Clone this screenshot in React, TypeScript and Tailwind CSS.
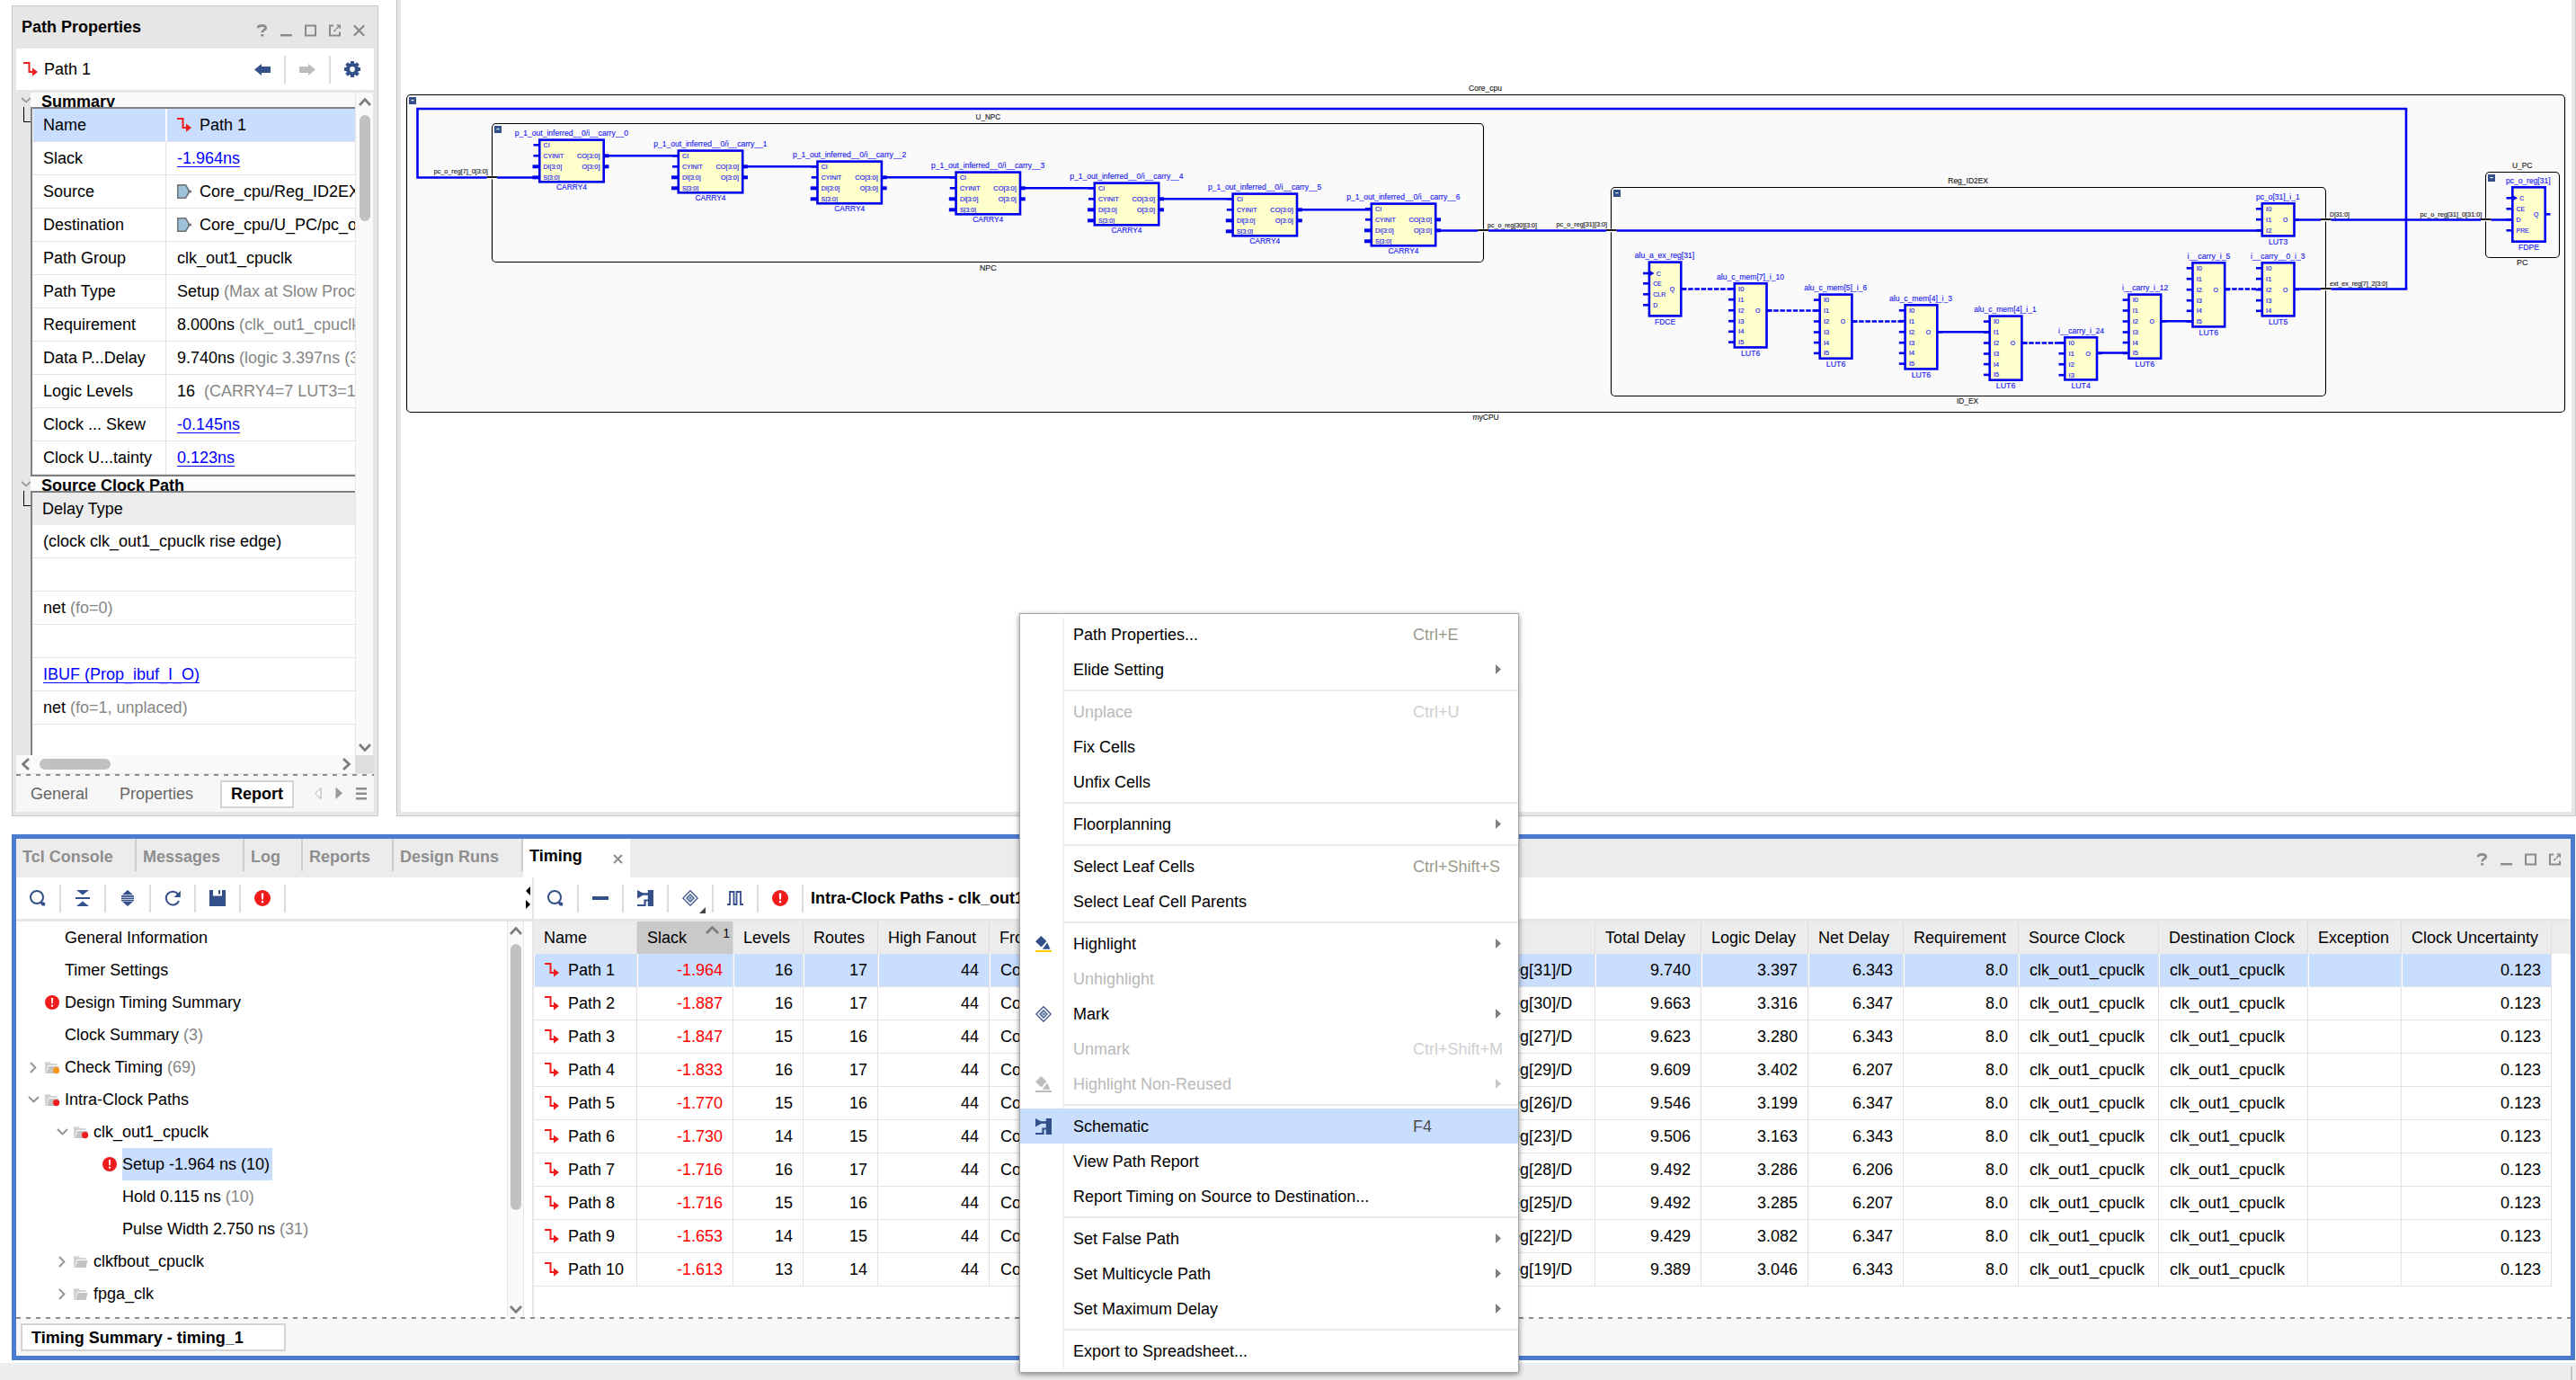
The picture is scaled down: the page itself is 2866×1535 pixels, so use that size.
import React from "react";

type IconProps = { className?: string };

/* ---------- small icons ---------- */

const PathIcon = ({ className = "" }: IconProps) => (
  <svg width="16" height="16" viewBox="0 0 16 16" className={`shrink-0 ${className}`}>
    <path d="M0 1H6.5V11H10" fill="none" stroke="#ee1c1c" strokeWidth="2" />
    <path d="M10 6.5L16 11L10 15.8Z" fill="#ee1c1c" />
  </svg>
);

const PinIcon = ({ className = "" }: IconProps) => (
  <svg width="16" height="16" viewBox="0 0 16 16" className={`shrink-0 ${className}`}>
    <path d="M.8 .8H9.5L13 6.5V9.5L9.5 15.2H.8Z" fill="#9cc2d8" stroke="#6f6f6f" strokeWidth="1.5" />
    <path d="M12.5 8H16" stroke="#6f6f6f" strokeWidth="2.5" />
  </svg>
);

const ErrorIcon = ({ size = 18 }: { size?: number }) => (
  <svg width={size} height={size} viewBox="0 0 18 18" className="shrink-0">
    <circle cx="9" cy="9" r="9" fill="#ee1c1c" />
    <path d="M7.8 3.5H10.2L9.9 10.5H8.1Z" fill="#fff" />
    <rect x="7.9" y="12" width="2.2" height="2.4" fill="#fff" />
  </svg>
);

const SearchIcon = () => (
  <svg width="18" height="18" viewBox="0 0 18 18">
    <circle cx="8" cy="8" r="7" fill="none" stroke="#33508a" strokeWidth="2" />
    <path d="M12.5 13.5L15 16" stroke="#33508a" strokeWidth="3" />
    <circle cx="15.3" cy="15.7" r="2.1" fill="#33508a" />
  </svg>
);

const CollapseIcon = () => (
  <svg width="16" height="18" viewBox="0 0 16 18" fill="#33508a">
    <path d="M1 0H15L8 5.5ZM1 18H15L8 12.5Z" />
    <rect y="8" width="16" height="2" />
  </svg>
);

const ExpandIcon = () => (
  <svg width="14" height="18" viewBox="0 0 14 18" fill="#33508a">
    <path d="M1 5.2L7 0L13 5.2ZM1 12.8L7 18L13 12.8Z" />
    <rect y="6" width="14" height="1.8" />
    <rect y="8.6" width="14" height="1.4" />
    <rect y="10.7" width="14" height="1.6" />
  </svg>
);

const RefreshIcon = () => (
  <svg width="18" height="18" viewBox="0 0 18 18">
    <path d="M15.2 4.8A7.4 7.4 0 1 0 16 12" fill="none" stroke="#33508a" strokeWidth="2" />
    <path d="M17.8 .8V8H10.6Z" fill="#33508a" />
  </svg>
);

const SaveIcon = () => (
  <svg width="18" height="18" viewBox="0 0 18 18">
    <path d="M0 0H4V6.5H14V0H18V18H0Z" fill="#33508a" />
    <path d="M10 0H12V4.5H10Z" fill="#33508a" />
  </svg>
);

const MinusIcon = () => <div className="h-1 w-[18px] bg-[#33508a]" />;

const SchematicIcon = () => (
  <svg width="18" height="18" viewBox="0 0 18 18" fill="#33508a">
    <path d="M0 0L6.5 3.6V5.8L0 9.5Z" />
    <path d="M5 3.2H12V5.8H5Z" />
    <path d="M11.8 0H18V18H11.8V12.6H9.6V18H0V16H7.4V10.4H11.8Z" />
  </svg>
);

const MarkIcon = () => (
  <svg width="18" height="18" viewBox="0 0 18 18" fill="none" stroke="#33508a">
    <path d="M9 .8L17.2 9L9 17.2L.8 9Z" strokeWidth="1.3" />
    <path d="M9 5L13 9L9 13L5 9Z" strokeWidth="1.3" />
    <circle cx="9" cy="9" r="1.2" strokeWidth="1" />
  </svg>
);

const WaveIcon = () => (
  <svg width="18" height="16" viewBox="0 0 18 16" fill="none" stroke="#33508a" strokeWidth="1.8">
    <path d="M0 15H3V1H7.5V15H10.5V1H15V15H18" />
  </svg>
);

const GearIcon = () => (
  <svg width="18" height="18" viewBox="-9 -9 18 18">
    {[0, 45, 90, 135].map((a) => (
      <rect key={a} x="-2" y="-9" width="4" height="18" fill="#33508a" transform={`rotate(${a})`} />
    ))}
    <circle r="7" fill="#33508a" />
    <circle r="2.9" fill="#fff" />
  </svg>
);

const Arrow = ({ color, flip }: { color: string; flip?: boolean }) => (
  <svg width="18" height="13" viewBox="0 0 18 13" className={flip ? "-scale-x-100" : ""}>
    <path d="M0 6.5L8 0V3H18V10H8V13Z" fill={color} />
  </svg>
);

const BucketIcon = ({ dim }: { dim?: boolean }) => (
  <svg width="18" height="18" viewBox="0 0 18 18">
    <path d="M6.3 0L12.4 6L6.5 12.6L0 6.3Z" fill={dim ? "#bdbdbd" : "#33508a"} />
    <path d="M13.2 7.5L16.5 14.8H7.8Z" fill={dim ? "#bdbdbd" : "#33508a"} />
    <rect y="16" width="18" height="2" fill={dim ? "#bdbdbd" : "#ffcc00"} />
  </svg>
);

const Chevron = ({ dir, w = 14, color = "#7d7d7d", sw = 2.8 }: { dir: "up" | "down" | "left" | "right"; w?: number; color?: string; sw?: number }) => {
  const vertical = dir === "up" || dir === "down";
  const h = Math.round(w * 0.62);
  const d = {
    up: `M1 ${h - 1}L${w / 2} 1.6L${w - 1} ${h - 1}`,
    down: `M1 1L${w / 2} ${h - 1.6}L${w - 1} 1`,
    left: `M${h - 1} 1L1.6 ${w / 2}L${h - 1} ${w - 1}`,
    right: `M1 1L${h - 1.6} ${w / 2}L1 ${w - 1}`,
  }[dir];
  return (
    <svg width={vertical ? w : h} height={vertical ? h : w} className="block shrink-0">
      <path d={d} fill="none" stroke={color} strokeWidth={sw} />
    </svg>
  );
};

const FolderIcon = ({ dot }: { dot?: string }) => (
  <svg width="17" height="15" viewBox="0 0 17 15" className="shrink-0">
    <path d="M0 14V1.2H5.5L7 3H13.5V5H4L1.5 14Z" fill="#d2d2d2" />
    <path d="M4.5 6H15.5L13.5 14H2Z" fill="#c3c3c3" />
    {dot && <circle cx="12.6" cy="10.6" r="3.6" fill={dot} />}
  </svg>
);

const WindowButtons = ({ close }: { close?: boolean }) => (
  <div className="flex gap-[14px]">
    <svg width="13" height="14" viewBox="0 0 13 14" fill="none" stroke="#8b8b8b" strokeWidth="2.6">
      <path d="M2 4.2C2.2 .6 10.8 .4 10.8 4C10.8 6.6 6.6 6.2 6.6 9.2" />
      <path d="M5.2 12.3H8.2" strokeWidth="2.4" />
    </svg>
    <svg width="13" height="14"><rect y="11" width="13" height="2.4" fill="#8b8b8b" /></svg>
    <svg width="13" height="14"><rect x="1" y="1.5" width="11" height="11" fill="none" stroke="#8b8b8b" strokeWidth="2" /></svg>
    <svg width="13" height="14" fill="none" stroke="#8b8b8b">
      <path d="M5 1.5H1V12.5H12V8.5" strokeWidth="2" />
      <path d="M5.5 8L11 2.5" strokeWidth="1.6" strokeDasharray="3 1" />
      <path d="M8 .5H13V5.5Z" fill="#8b8b8b" stroke="none" />
    </svg>
    {close && (
      <svg width="13" height="14"><path d="M.8 1.2L12.2 12.8M12.2 1.2L.8 12.8" stroke="#8b8b8b" strokeWidth="2.2" /></svg>
    )}
  </div>
);

const DashedLine = () => (
  <div className="h-[2px] w-full shrink-0 bg-[repeating-linear-gradient(90deg,#8f8f8f_0,#8f8f8f_5px,#f7f7f7_5px,#f7f7f7_11px)]" />
);

/* ---------- path properties panel ---------- */

const G = ({ children }: { children: React.ReactNode }) => <span className="text-[#868686]">{children}</span>;
const Link = ({ children }: { children: React.ReactNode }) => (
  <span className="border-b border-[#0000ff] leading-[18px] text-[#0000ff]">{children}</span>
);

const summary: [string, React.ReactNode][] = [
  ["Slack", <Link>-1.964ns</Link>],
  ["Source", <><PinIcon className="mr-[9px]" />Core_cpu/Reg_ID2EX/alu_a</>],
  ["Destination", <><PinIcon className="mr-[9px]" />Core_cpu/U_PC/pc_o_reg</>],
  ["Path Group", "clk_out1_cpuclk"],
  ["Path Type", <>Setup <G>(Max at Slow Process</G></>],
  ["Requirement", <>8.000ns <G>(clk_out1_cpuclk rise</G></>],
  ["Data P...Delay", <>9.740ns <G>(logic 3.397ns (34</G></>],
  ["Logic Levels", <>16 <G>&nbsp;(CARRY4=7 LUT3=1</G></>],
  ["Clock ... Skew", <Link>-0.145ns</Link>],
  ["Clock U...tainty", <Link>0.123ns</Link>],
];

const delays: React.ReactNode[] = [
  "(clock clk_out1_cpuclk rise edge)",
  "",
  <>net <G>&nbsp;(fo=0)</G></>,
  "",
  <Link>IBUF (Prop_ibuf_I_O)</Link>,
  <>net <G>&nbsp;(fo=1, unplaced)</G></>,
];

function PathProperties() {
  return (
    <section className="ml-[13px] mt-[6px] flex h-[902px] w-[408px] shrink-0 flex-col border border-[#c9c9c9] bg-[#e6e6e6] px-1 pb-1">
      <header className="flex h-[47px] shrink-0 items-center justify-between pl-[6px] pr-[10px]">
        <h2 className="-mt-[2px] text-[18px] font-bold">Path Properties</h2>
        <div className="mt-[6px]"><WindowButtons close /></div>
      </header>
      <div className="flex h-[46px] shrink-0 items-center bg-white pl-2">
        <PathIcon />
        <span className="ml-[7px] grow">Path 1</span>
        <Arrow color="#33508a" />
        <div className="ml-[15px] h-[31px] w-[2px] bg-[#dcdcdc]" />
        <div className="ml-[15px]"><Arrow color="#bdbdbd" flip /></div>
        <div className="mx-[15px] h-[31px] w-[2px] bg-[#dcdcdc]" />
        <div className="mr-[15px]"><GearIcon /></div>
      </div>
      <div className="mt-[3px] flex h-[737px] shrink-0">
        <div className="w-4 shrink-0">
          <div className="flex h-[16px] items-center pl-[5px]"><Chevron dir="down" w={12} sw={1.8} color="#9a9a9a" /></div>
          <div className="ml-2 h-[17px] border-b border-l border-black" />
          <div className="mt-[394px] flex h-[16px] items-center pl-[5px]"><Chevron dir="down" w={12} sw={1.8} color="#9a9a9a" /></div>
          <div className="ml-2 h-[17px] border-b border-l border-black" />
        </div>
        <div className="w-[361px] shrink-0 overflow-hidden bg-white">
          <div className="h-[16px] overflow-hidden bg-[#fafafa] pl-3 text-[18px] font-bold leading-[20px]">Summary</div>
          <div className="h-[411px] border-y-2 border-l-2 border-[#808080]">
            <div className="flex h-[37px] border-b border-[#e2e2e2] pl-px">
              <div className="flex w-[147px] items-center bg-[#c9ddff] pl-[11px]">Name</div>
              <div className="ml-[2px] flex grow items-center bg-[#c9ddff] pl-[11px]"><PathIcon className="mr-[9px]" />Path 1</div>
            </div>
            {summary.map(([k, v]) => (
              <div key={k} className="flex h-[37px] border-b border-[#e2e2e2]">
                <div className="flex w-[149px] shrink-0 items-center border-r border-[#e2e2e2] pl-3">{k}</div>
                <div className="flex items-center whitespace-pre pl-3">{v}</div>
              </div>
            ))}
          </div>
          <div className="h-[16px] overflow-hidden bg-[#fcfcfc] pl-3 text-[18px] font-bold leading-[20px]">Source Clock Path</div>
          <div className="border-l-2 border-t-2 border-[#808080]">
            <div className="flex h-[36px] items-center bg-[#ececec] pl-[11px]">Delay Type</div>
            {delays.map((d, i) => (
              <div key={i} className="flex h-[37px] items-center border-b border-[#e2e2e2] pl-3">{d}</div>
            ))}
            <div className="h-[37px]" />
          </div>
        </div>
        <div className="flex w-[20px] shrink-0 flex-col items-center border-l border-[#e6e6e6] bg-[#fafafa] pt-[6px]">
          <Chevron dir="up" />
          <div className="mt-[10px] h-[118px] w-3 rounded-full bg-[#c1c1c1]" />
          <div className="mb-1 mt-auto"><Chevron dir="down" /></div>
        </div>
      </div>
      <div className="flex h-[20px] shrink-0">
        <div className="flex w-[377px] items-center bg-[#fafafa] pl-[6px]">
          <Chevron dir="left" />
          <div className="ml-[11px] h-3 w-[79px] rounded-full bg-[#c1c1c1]" />
          <div className="ml-auto mr-[5px]"><Chevron dir="right" /></div>
        </div>
        <div className="grow bg-[#dedede]" />
      </div>
      <div className="mt-px"><DashedLine /></div>
      <div className="flex grow items-center bg-[#f7f7f7] pl-4 text-[#666]">
        <span className="w-[99px]">General</span>
        <span className="w-[112px]">Properties</span>
        <span className="flex h-[31px] w-[82px] items-center justify-center border-2 border-[#d4d4d4] bg-white font-bold text-black">Report</span>
        <svg width="60" height="16" className="ml-[23px]">
          <path d="M7 1.5V13.5L1 7.5Z" fill="#fff" stroke="#a8a8a8" />
          <path d="M23.5 .5V14L31 7.3Z" fill="#9a9a9a" />
          <path d="M46 2.2H58M46 7.7H58M46 13.2H58" stroke="#8d8d8d" strokeWidth="2.6" />
        </svg>
      </div>
    </section>
  );
}

/* ---------- schematic canvas ---------- */

const BLUE = "#0000f0";
const INK = "#1c1cf2";

const T = ({ x, y, w, s, children, fill = INK }: { x: number; y: number; w: number; s: number; children: string; fill?: string }) => (
  <text x={x} y={y} fontSize={s} textLength={w} lengthAdjust="spacingAndGlyphs" fill={fill} stroke={fill} strokeWidth="0.15">{children}</text>
);

type Pin = { n: string; y: number; w: number; bus?: boolean; clk?: boolean };
type CellDef = {
  x: number; y: number; w: number; h: number;
  title: string; tx: number; tw: number; type: string; typeW: number;
  ins: Pin[]; outs: Pin[];
};

function Cell({ c }: { c: CellDef }) {
  return (
    <g>
      {c.ins.map((p) => (
        <path key={p.n} d={`M${c.x - (p.bus ? 6.5 : 5.5)} ${c.y + p.y}H${c.x + 1}`} stroke={BLUE} strokeWidth={p.bus ? 4 : 2.6} />
      ))}
      {c.outs.map((p) => (
        <path key={p.n} d={`M${c.x + c.w - 1} ${c.y + p.y}H${c.x + c.w + 4.5}`} stroke={BLUE} strokeWidth={p.bus ? 4 : 2.6} />
      ))}
      <rect x={c.x + 1.3} y={c.y + 1.3} width={c.w - 2.6} height={c.h - 2.6} fill="#ffffcc" stroke={BLUE} strokeWidth="2.6" />
      {c.ins.map((p) => (
        <g key={p.n}>
          {p.clk && <path d={`M${c.x + 1} ${c.y + p.y - 3.5}L${c.x + 7} ${c.y + p.y}L${c.x + 1} ${c.y + p.y + 3.5}Z`} fill={BLUE} />}
          <T x={c.x + (p.clk ? 9.2 : 5.6)} y={c.y + p.y + 2.5} w={p.w} s={7}>{p.n}</T>
        </g>
      ))}
      {c.outs.map((p) => (
        <T key={p.n} x={c.x + c.w - (p.bus ? 5.5 : 8.5) - p.w} y={c.y + p.y + 2.5} w={p.w} s={7}>{p.n}</T>
      ))}
      <T x={c.tx} y={c.y - 3.2} w={c.tw} s={9.4}>{c.title}</T>
      <T x={c.x + c.w / 2 - c.typeW / 2} y={c.y + c.h + 7.8} w={c.typeW} s={9.4}>{c.type}</T>
    </g>
  );
}

const carryPos = [[599, 154.3], [753.5, 166.3], [908.2, 178.3], [1062.3, 190.3], [1216.5, 202.3], [1370.3, 214.3], [1524.5, 225.3]];
const carries: CellDef[] = carryPos.map(([x, y], i) => ({
  x, y, w: 74, h: 49.3,
  title: `p_1_out_inferred__0/i__carry__${i}`, tx: x - 26.3, tw: 126.3, type: "CARRY4", typeW: 34,
  ins: [
    { n: "CI", y: 7, w: 7 }, { n: "CYINIT", y: 19, w: 22.5 },
    { n: "DI[3:0]", y: 31, w: 20.5, bus: true }, { n: "S[3:0]", y: 43, w: 18, bus: true },
  ],
  outs: [{ n: "CO[3:0]", y: 19, w: 25.5, bus: true }, { n: "O[3:0]", y: 31, w: 20, bus: true }],
}));

const lutOffsets = [7.3, 19.2, 31.2, 43.2, 54.8, 66.6];
const lut = (x: number, y: number, n: number, h: number, o: number, title: string, tx: number, tw: number): CellDef => ({
  x, y, w: 38.3, h, title, tx, tw, type: `LUT${n}`, typeW: 21.5,
  ins: lutOffsets.slice(0, n).map((py, i) => ({ n: `I${i}`, y: py, w: 6.2 })),
  outs: [{ n: "O", y: o, w: 5.4 }],
});

const cells: CellDef[] = [
  ...carries,
  {
    x: 1833.6, y: 290.3, w: 38, h: 62.4, title: "alu_a_ex_reg[31]", tx: 1818.7, tw: 66.5, type: "FDCE", typeW: 23,
    ins: [{ n: "C", y: 13.7, w: 5, clk: true }, { n: "CE", y: 25, w: 9.5 }, { n: "CLR", y: 37, w: 14 }, { n: "D", y: 49, w: 5 }],
    outs: [{ n: "Q", y: 31, w: 5.4 }],
  },
  lut(1928.5, 314, 6, 73.7, 31.3, "alu_c_mem[7]_i_10", 1910, 75),
  lut(2023.4, 326.3, 6, 73.7, 31.3, "alu_c_mem[5]_i_6", 2007.2, 70),
  lut(2118.3, 338, 6, 73.7, 31.3, "alu_c_mem[4]_i_3", 2102, 70),
  lut(2212.4, 350.3, 6, 73.7, 31.3, "alu_c_mem[4]_i_1", 2196.2, 69.5),
  lut(2296, 374, 4, 49.7, 19, "i__carry_i_24", 2290, 51),
  lut(2367.2, 326.3, 6, 73.7, 31, "i__carry_i_12", 2360.9, 51.3),
  lut(2438.2, 291, 6, 73.7, 31, "i__carry_i_5", 2433.5, 48),
  lut(2515.5, 291, 5, 61.7, 31, "i__carry__0_i_3", 2503.9, 60.5),
  lut(2515.5, 225, 3, 38.7, 19.3, "pc_o[31]_i_1", 2510, 48.7),
  {
    x: 2794, y: 207, w: 39, h: 63, title: "pc_o_reg[31]", tx: 2788, tw: 49.5, type: "FDPE", typeW: 23,
    ins: [{ n: "C", y: 13.3, w: 5, clk: true }, { n: "CE", y: 25.3, w: 9.5 }, { n: "D", y: 37.3, w: 5 }, { n: "PRE", y: 49.3, w: 14 }],
    outs: [{ n: "Q", y: 31.3, w: 5.4 }],
  },
];

const Module = ({ x, y, r, b }: { x: number; y: number; r: number; b: number }) => (
  <g>
    <rect x={x} y={y} width={r - x} height={b - y} rx="4.5" fill="#fafafa" stroke="#000" strokeWidth="1.1" />
    <rect x={Math.round(x + 2.5)} y={Math.round(y + 2.2)} width="8" height="8" fill="#33508a" />
    <rect x={Math.round(x + 2.5) + 2.5} y={Math.round(y + 2.2) + 3} width="3" height="1.2" fill="#fff" />
  </g>
);

function SchematicDrawing() {
  return (
    <svg width="2414" height="903" viewBox="446 0 2414 903" className="block" fontFamily='"Liberation Sans", Arial, sans-serif'>
      <Module x={452.5} y={105.5} r={2853.5} b={458.5} />
      <Module x={547.5} y={137.5} r={1650.5} b={291.5} />
      <Module x={1792.5} y={208.5} r={2587.5} b={440.5} />
      <Module x={2765.5} y={191.5} r={2847.5} b={286.5} />

      <g fill="none" stroke={BLUE} strokeWidth="2.6">
        <path d="M2582 321.5H2677V121H464.5V197.5H600" />
        {carries.slice(0, 6).map((c, i) => (
          <path key={i} d={`M${c.x + 74} ${c.y + 19}H${carries[i + 1].x + 1}`} />
        ))}
        <path d="M1598 256.5H2516" />
        <path d="M2553 244.5H2795" />
        <path d="M2553 321.5H2590" />
        <path d="M2156 369.3H2213" />
        <path d="M2334 392.5H2368" />
        <path d="M2405 357.3H2439" />
        <g strokeDasharray="5.5 1.7">
          <path d="M1871 321.5H1929" />
          <path d="M1966 345.5H2024" />
          <path d="M2061 357.5H2119" />
          <path d="M2250 381.5H2297" />
          <path d="M2476 321.5H2516" />
        </g>
      </g>

      <g stroke="#000" strokeWidth="1.8">
        {[[541.6, 197], [1644.3, 256], [1787, 256], [2582, 244], [2582, 321], [2760, 244]].map(([x, y], i) => (
          <g key={i}>
            <path d={`M${x} ${y + 0.5}H${x + 11.5}`} stroke="#fafafa" strokeWidth="3.6" />
            <path d={`M${x} ${y}H${x + 11.5}`} />
          </g>
        ))}
      </g>

      {cells.map((c, i) => <Cell key={i} c={c} />)}

      <T x={1634} y={100.7} w={37} s={9.4} fill="#222">Core_cpu</T>
      <T x={1638.4} y={466.8} w={29.4} s={9.4} fill="#222">myCPU</T>
      <T x={1085.6} y={132.9} w={27.4} s={9.4} fill="#222">U_NPC</T>
      <T x={1090} y={300.9} w={18.5} s={9.4} fill="#222">NPC</T>
      <T x={2167.3} y={203.7} w={44.7} s={9.4} fill="#222">Reg_ID2EX</T>
      <T x={2177} y={448.8} w={24} s={9.4} fill="#222">ID_EX</T>
      <T x={2795} y={186.8} w={22.4} s={9.4} fill="#222">U_PC</T>
      <T x={2800} y={294.8} w={12.5} s={9.4} fill="#222">PC</T>
      <T x={482.7} y={193.2} w={60} s={7} fill="#222">pc_o_reg[7]_0[3:0]</T>
      <T x={1655} y={252.8} w={55} s={7} fill="#222">pc_o_reg[30][3:0]</T>
      <T x={1731.6} y={252.4} w={56.4} s={7} fill="#222">pc_o_reg[31][3:0]</T>
      <T x={2592} y={241.3} w={22} s={7} fill="#222">D[31:0]</T>
      <T x={2692.5} y={241.3} w={68.8} s={7} fill="#222">pc_o_reg[31]_0[31:0]</T>
      <T x={2592} y={318.3} w={64.2} s={7} fill="#222">ext_ex_reg[7]_2[3:0]</T>
    </svg>
  );
}

/* ---------- timing panel ---------- */

type TreeRow = { level: 1 | 2 | 3; label: string; count?: string; icon?: React.ReactNode; toggle?: "right" | "down"; selected?: boolean };

const tree: TreeRow[] = [
  { level: 1, label: "General Information" },
  { level: 1, label: "Timer Settings" },
  { level: 1, label: "Design Timing Summary", icon: <ErrorIcon size={16} /> },
  { level: 1, label: "Clock Summary", count: "(3)" },
  { level: 1, label: "Check Timing", count: "(69)", icon: <FolderIcon dot="#f7941d" />, toggle: "right" },
  { level: 1, label: "Intra-Clock Paths", icon: <FolderIcon dot="#ee1c1c" />, toggle: "down" },
  { level: 2, label: "clk_out1_cpuclk", icon: <FolderIcon dot="#ee1c1c" />, toggle: "down" },
  { level: 3, label: "Setup -1.964 ns", count: "(10)", icon: <ErrorIcon size={16} />, selected: true },
  { level: 3, label: "Hold 0.115 ns", count: "(10)" },
  { level: 3, label: "Pulse Width 2.750 ns", count: "(31)" },
  { level: 2, label: "clkfbout_cpuclk", icon: <FolderIcon />, toggle: "right" },
  { level: 2, label: "fpga_clk", icon: <FolderIcon />, toggle: "right" },
];
const indent = { 1: "pl-[10px]", 2: "pl-[42px]", 3: "pl-[74px]" };

const COLS =
  "grid grid-cols-[115px_107px_78px_83px_124px_378px_296px_118px_119px_106px_128px_156px_166px_104px_167px]";

const headers = [
  "Name", "Slack", "Levels", "Routes", "High Fanout", "From", "To", "Total Delay", "Logic Delay", "Net Delay",
  "Requirement", "Source Clock", "Destination Clock", "Exception", "Clock Uncertainty",
];

const paths = [
  ["-1.964", "16", "17", "31", "9.740", "3.397", "6.343"],
  ["-1.887", "16", "17", "30", "9.663", "3.316", "6.347"],
  ["-1.847", "15", "16", "27", "9.623", "3.280", "6.343"],
  ["-1.833", "16", "17", "29", "9.609", "3.402", "6.207"],
  ["-1.770", "15", "16", "26", "9.546", "3.199", "6.347"],
  ["-1.730", "14", "15", "23", "9.506", "3.163", "6.343"],
  ["-1.716", "16", "17", "28", "9.492", "3.286", "6.206"],
  ["-1.716", "15", "16", "25", "9.492", "3.285", "6.207"],
  ["-1.653", "14", "15", "22", "9.429", "3.082", "6.347"],
  ["-1.613", "13", "14", "19", "9.389", "3.046", "6.343"],
];

const ToolbarCell = ({ children }: { children: React.ReactNode }) => (
  <div className="flex w-[50px] shrink-0 items-center">
    <div className="flex grow justify-center">{children}</div>
    <div className="h-[31px] w-[2px] bg-[#dcdcdc]" />
  </div>
);

const tabs: [string, string][] = [
  ["Tcl Console", "w-[134px]"],
  ["Messages", "w-[120px]"],
  ["Log", "w-[65px]"],
  ["Reports", "w-[101px]"],
  ["Design Runs", "w-[144px]"],
];

function PathTable() {
  return (
    <div className="flex grow flex-col">
      <div className={`${COLS} h-9 shrink-0 bg-[#ececec]`}>
        {headers.map((h, i) => (
          <div
            key={h}
            className={`flex items-center overflow-hidden whitespace-nowrap border-r border-[#dcdcdc] pl-[11px] ${i === 1 ? "bg-[#c9c9c9]" : ""}`}
          >
            {h}
            {i === 1 && (
              <div className="-mt-[11px] ml-auto mr-[3px] flex items-start">
                <Chevron dir="up" w={15} />
                <span className="ml-[4px] text-[14px] leading-[16px]">1</span>
              </div>
            )}
          </div>
        ))}
      </div>
      {paths.map(([slack, levels, routes, to, total, logic, net], i) => {
        const bg = i === 0 ? "bg-[#c9ddff] border-l border-l-white" : "border-l border-l-transparent";
        const cell = `flex items-center overflow-hidden whitespace-nowrap border-r border-r-[#e2e2e2] border-b border-b-[#e2e2e2] ${bg}`;
        const num = `${cell} justify-end pr-[11px]`;
        return (
          <div key={i} className={`${COLS} h-[37px] shrink-0`}>
            <div className={`${cell} pl-[11px]`}><PathIcon className="mr-[10px]" />Path {i + 1}</div>
            <div className={`${num} text-[#ff0000]`}>{slack}</div>
            <div className={num}>{levels}</div>
            <div className={num}>{routes}</div>
            <div className={num}>44</div>
            <div className={`${cell} pl-[11px]`}>Core_cpu/Reg_ID2EX/alu_a_ex_reg[31]/C</div>
            <div className={`${cell} pl-[10px]`}>Core_cpu/U_PC/pc_o_reg[{to}]/D</div>
            <div className={num}>{total}</div>
            <div className={num}>{logic}</div>
            <div className={num}>{net}</div>
            <div className={num}>8.0</div>
            <div className={`${cell} pl-[11px]`}>clk_out1_cpuclk</div>
            <div className={`${cell} pl-[11px]`}>clk_out1_cpuclk</div>
            <div className={cell} />
            <div className={num}>0.123</div>
          </div>
        );
      })}
    </div>
  );
}

function TimingPanel() {
  return (
    <section className="ml-[13px] flex h-[585px] w-[2852px] shrink-0 flex-col border-[5px] border-[#4a7bcf] bg-white">
      <div className="flex h-[43px] shrink-0 bg-[#ececec] font-bold text-[#8e8e8e]">
        {tabs.map(([t, w]) => (
          <div key={t} className={`${w} flex h-9 items-center border-r-2 border-[#cdcdcd] pl-[7px] pt-[3px]`}>{t}</div>
        ))}
        <div className="flex w-[119px] items-start bg-white pl-[7px] text-black">
          <span className="mt-[9px] leading-[21px]">Timing</span>
          <svg width="11" height="11" className="ml-[34px] mt-[17px]"><path d="M1 1L10 10M10 1L1 10" stroke="#8b8b8b" strokeWidth="1.9" /></svg>
        </div>
        <div className="ml-auto mr-[11px] mt-4"><WindowButtons /></div>
      </div>

      <div className="flex h-[532px] shrink-0">
        {/* report tree */}
        <div className="flex w-[565px] shrink-0 flex-col">
          <div className="flex h-[49px] shrink-0 border-b-[3px] border-[#e6e6e6]">
            <ToolbarCell><SearchIcon /></ToolbarCell>
            <ToolbarCell><CollapseIcon /></ToolbarCell>
            <ToolbarCell><ExpandIcon /></ToolbarCell>
            <ToolbarCell><RefreshIcon /></ToolbarCell>
            <ToolbarCell><SaveIcon /></ToolbarCell>
            <ToolbarCell><ErrorIcon /></ToolbarCell>
          </div>
          <div className="flex h-[440px]">
            <div className="w-[546px]">
              {tree.map((r) => (
                <div key={r.label} className={`flex h-9 items-center ${indent[r.level]}`}>
                  <div className="mr-1 flex w-[18px] justify-center">
                    {r.toggle && <Chevron dir={r.toggle} w={13} color="#8f8f8f" sw={1.8} />}
                  </div>
                  <div className="flex w-[22px] items-center">{r.icon}</div>
                  <span className={r.selected ? "flex h-9 items-center bg-[#c9ddff] pr-[3px]" : ""}>
                    {r.label}
                    {r.count && <span className={r.selected ? "ml-[5px]" : "ml-[5px] text-[#868686]"}>{r.count}</span>}
                  </span>
                </div>
              ))}
            </div>
            <div className="flex w-[19px] flex-col items-center border-x border-[#e6e6e6] bg-[#fafafa] pt-[6px]">
              <Chevron dir="up" />
              <div className="mt-[10px] h-[296px] w-3 rounded-full bg-[#c1c1c1]" />
              <div className="mb-1 mt-auto"><Chevron dir="down" /></div>
            </div>
          </div>
        </div>

        {/* splitter */}
        <div className="flex w-[9px] shrink-0 flex-col">
          <div className="h-[49px] border-b-[3px] border-[#e6e6e6]">
            <svg width="9" height="46" fill="#000">
              <path d="M7 10V20L2 15Z" />
              <path d="M2 25V35L7 30Z" />
            </svg>
          </div>
        </div>

        {/* path table */}
        <div className="flex h-[489px] w-[2268px] flex-col border-l-2 border-[#e6e6e6]">
          <div className="flex h-[49px] shrink-0 items-center border-b-[3px] border-[#e6e6e6]">
            <ToolbarCell><SearchIcon /></ToolbarCell>
            <ToolbarCell><MinusIcon /></ToolbarCell>
            <ToolbarCell><SchematicIcon /></ToolbarCell>
            <ToolbarCell>
              <div className="relative">
                <MarkIcon />
                <svg width="7" height="7" className="absolute -bottom-2 -right-2"><path d="M7 0V7H0Z" fill="#444" /></svg>
              </div>
            </ToolbarCell>
            <ToolbarCell><WaveIcon /></ToolbarCell>
            <ToolbarCell><ErrorIcon /></ToolbarCell>
            <span className="ml-2 font-bold">Intra-Clock Paths - clk_out1_cpuclk - Setup</span>
          </div>
          <PathTable />
        </div>
      </div>
      <BottomTabs />
    </section>
  );
}

const BottomTabs = () => (
  <div className="-mt-[43px] flex h-[43px] shrink-0 flex-col bg-[#f7f7f7]">
    <DashedLine />
    <div className="ml-[5px] mt-[5px] flex h-[31px] w-[295px] items-center border-2 border-[#d4d4d4] bg-white pl-[10px] font-bold">
      Timing Summary - timing_1
    </div>
  </div>
);

/* ---------- context menu ---------- */

type Item = { label: string; key?: string; sub?: boolean; off?: boolean; icon?: React.ReactNode; on?: boolean };

const groups: Item[][] = [
  [{ label: "Path Properties...", key: "Ctrl+E" }, { label: "Elide Setting", sub: true }],
  [{ label: "Unplace", key: "Ctrl+U", off: true }, { label: "Fix Cells" }, { label: "Unfix Cells" }],
  [{ label: "Floorplanning", sub: true }],
  [{ label: "Select Leaf Cells", key: "Ctrl+Shift+S" }, { label: "Select Leaf Cell Parents" }],
  [
    { label: "Highlight", sub: true, icon: <BucketIcon /> },
    { label: "Unhighlight", off: true },
    { label: "Mark", sub: true, icon: <MarkIcon /> },
    { label: "Unmark", key: "Ctrl+Shift+M", off: true },
    { label: "Highlight Non-Reused", sub: true, off: true, icon: <BucketIcon dim /> },
  ],
  [
    { label: "Schematic", key: "F4", on: true, icon: <SchematicIcon /> },
    { label: "View Path Report" },
    { label: "Report Timing on Source to Destination..." },
  ],
  [{ label: "Set False Path", sub: true }, { label: "Set Multicycle Path", sub: true }, { label: "Set Maximum Delay", sub: true }],
  [{ label: "Export to Spreadsheet..." }],
];

function ContextMenu() {
  return (
    <div className="absolute left-[1134px] top-[682px] h-[845px] w-[556px] border border-[#a6a6a6] bg-white pt-[3px] shadow-[0_2px_6px_rgba(0,0,0,0.45)]">
      <div className="absolute bottom-[3px] left-[47px] top-1 w-[2px] bg-[#f0f0f0]" />
      {groups.map((g, gi) => (
        <div key={gi} className="relative">
          {gi > 0 && <div className="ml-[49px] h-2 pt-[3px]"><div className="h-[2px] bg-[#ebebeb]" /></div>}
          {g.map((it) => (
            <div
              key={it.label}
              className={`flex h-[39px] items-center ${it.on ? "bg-[#c9ddff]" : ""} ${it.off ? "text-[#b9b9b9]" : "text-black"}`}
            >
              <div className="flex w-[59px] shrink-0 pl-[17px]">{it.icon}</div>
              <span className="w-[378px] shrink-0">{it.label}</span>
              <span className={`w-[92px] shrink-0 whitespace-nowrap ${it.off ? "text-[#cfcfcf]" : it.on ? "text-[#4a4a4a]" : "text-[#9a9a8c]"}`}>{it.key}</span>
              {it.sub && (
                <svg width="6" height="11"><path d="M0 0L6 5.5L0 11Z" fill={it.off ? "#c8c8c8" : "#808080"} /></svg>
              )}
            </div>
          ))}
        </div>
      ))}
    </div>
  );
}

/* ---------- window ---------- */

export default function App() {
  return (
    <div className="relative flex h-[1535px] w-[2866px] flex-col overflow-hidden bg-white font-['Liberation_Sans',Arial,sans-serif] text-[18px] leading-[20px] text-black">
      <div className="flex h-[928px] shrink-0">
        <PathProperties />
        <section className="ml-5 h-[908px] w-[2425px] shrink-0 border-x border-b border-[#c9c9c9]">
          <div className="h-[907px] border-x-4 border-b-4 border-[#e6e6e6] bg-white">
            <SchematicDrawing />
          </div>
        </section>
      </div>
      <TimingPanel />
      <footer className="mt-[3px] flex grow justify-end bg-[#eeeeee]">
        <div className="mr-1 mt-1 w-[2px] bg-[#c4c4c4]" />
      </footer>
      <ContextMenu />
    </div>
  );
}
